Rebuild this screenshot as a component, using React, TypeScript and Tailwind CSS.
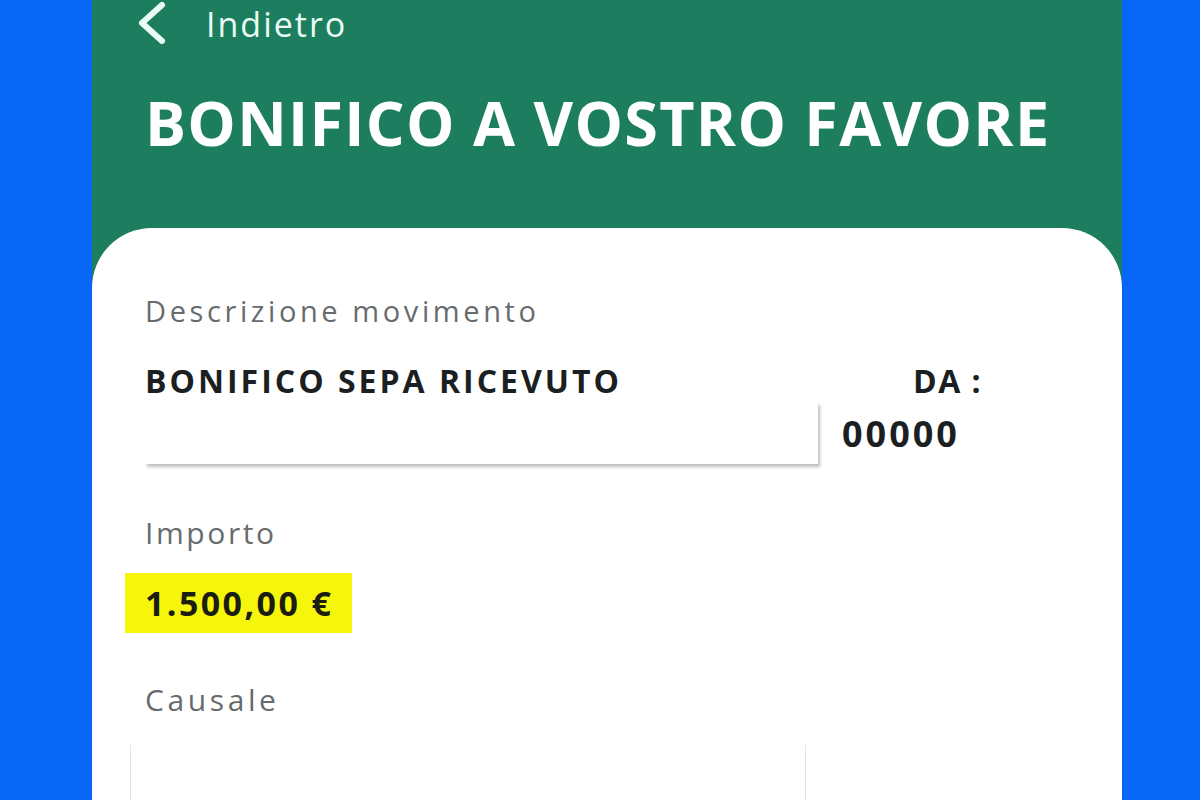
const font = { fontFamily: '"Open Sans", "Noto Sans", sans-serif' };

export default function App() {
  return (
    <div className="w-[1200px] h-[800px] overflow-hidden bg-[#0866f6] pl-[92px]" style={font}>
      <div className="w-[1030px] h-full bg-[#1d7e5f] flex flex-col">
        {/* Header */}
        <div className="flex items-center h-[48px] pl-[44px] gap-[38px] text-[#eafcf3]">
          <svg width="32" height="44" viewBox="0 0 32 44" fill="none" className="mt-[-4px]">
            <polyline points="26,5 6,23 26,41" stroke="currentColor" strokeWidth="6" strokeLinecap="round" strokeLinejoin="round" />
          </svg>
          <span className="text-[34px] leading-[48px] tracking-[2px]">Indietro</span>
        </div>
        <h1 className="text-white font-bold text-[61px] leading-none pl-[53px] pt-[44px] tracking-[1.3px]">
          BONIFICO A VOSTRO FAVORE
        </h1>

        {/* Card */}
        <div className="flex-1 mt-[75px] bg-white rounded-t-[60px] pl-[53px] pr-[40px] pt-[68px]">
          <p className="text-[29px] text-[#666b6e] tracking-[3.6px] leading-none">Descrizione movimento</p>

          <div className="flex mt-[40px]">
            <div className="w-[673px]">
              <p className="text-[32px] font-bold text-[#1c1f21] leading-none tracking-[3px]">BONIFICO SEPA RICEVUTO</p>
              <div className="h-[62px] mt-[5px] bg-white shadow-[2px_3px_3px_rgba(0,0,0,0.25)]" />
            </div>
            <div className="ml-[24px] flex flex-col">
              <p className="text-[32px] font-bold text-[#1c1f21] leading-none pl-[71px] tracking-[1.5px]">DA :</p>
              <p className="text-[36px] font-bold text-[#1c1f21] leading-none mt-[19px] tracking-[3px]">00000</p>
            </div>
          </div>

          <p className="text-[30px] text-[#666b6e] tracking-[2.6px] leading-none mt-[54px]">Importo</p>
          <div className="mt-[25px] ml-[-20px] inline-flex items-center h-[60px] pl-[20px] pr-[19px] bg-[#f6f60c]">
            <span className="text-[34px] font-bold text-[#1a1d10] leading-none tracking-[2.4px]">1.500,00 €</span>
          </div>

          <p className="text-[30px] text-[#666b6e] tracking-[3.6px] leading-none mt-[52px]">Causale</p>
          <div className="mt-[30px] ml-[-15px] w-[676px] h-[80px] border-l border-r border-[#e4e4e4]" />
        </div>
      </div>
    </div>
  );
}
